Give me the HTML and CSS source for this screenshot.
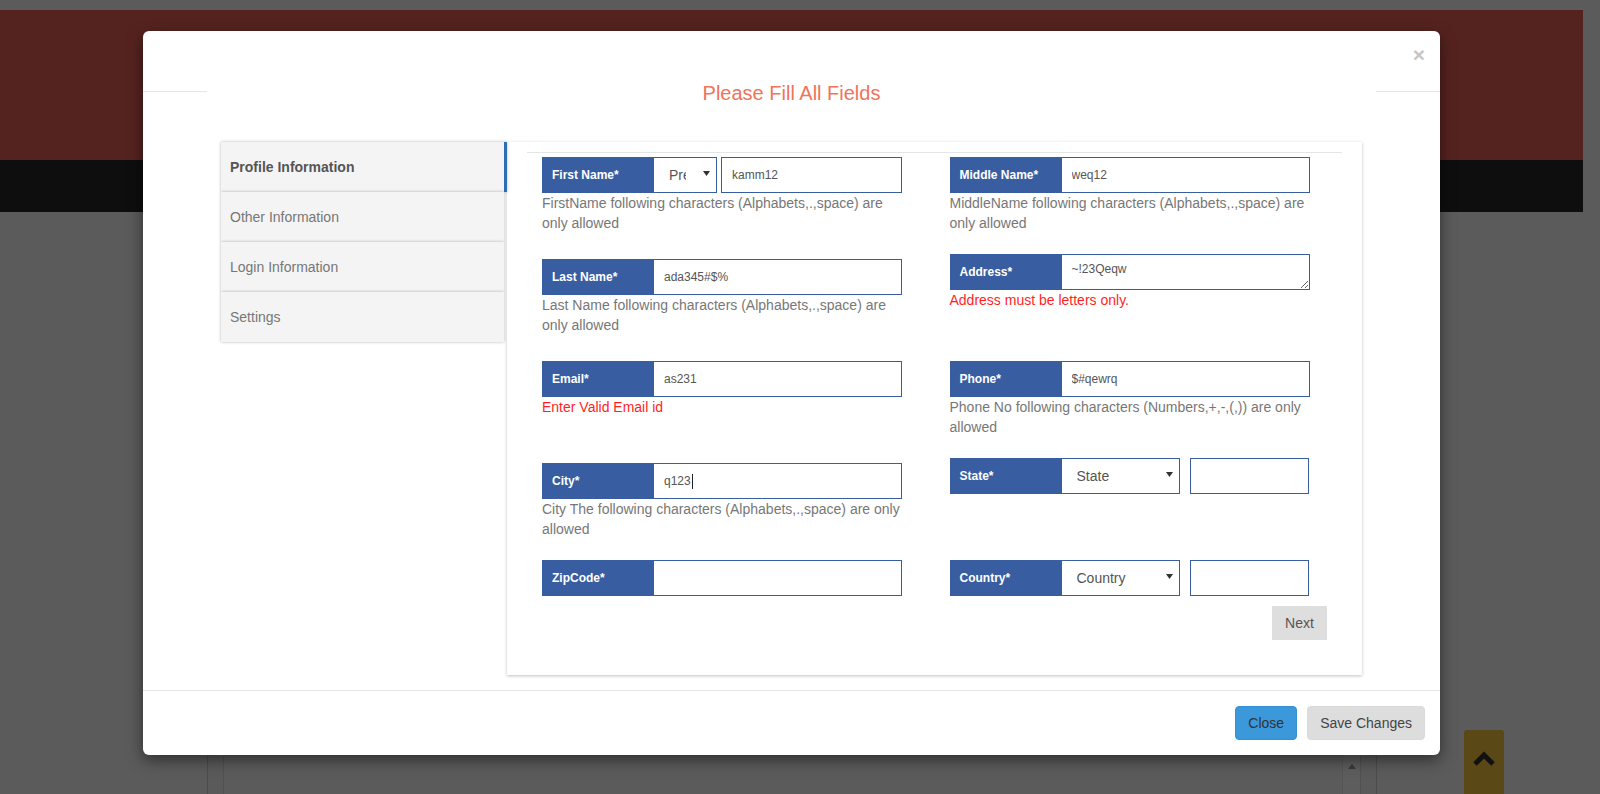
FILE: index.html
```html
<!DOCTYPE html>
<html lang="en">
<head>
<meta charset="utf-8">
<title>Profile</title>
<link rel="stylesheet" href="styles.css">
</head>
<body>
<div class="page">
  <header class="banner"></header>
  <nav class="navbar"></nav>
  <main class="content">
    <div class="content-box">
      <div class="editor">
        <div class="editor-area"></div>
        <div class="editor-scroll"><span class="scroll-up"></span></div>
      </div>
    </div>
  </main>
</div>

<a class="to-top" href="#">
  <svg width="24" height="16" viewBox="0 0 24 16"><polyline points="3,14 12,5 21,14" fill="none" stroke="#111" stroke-width="5"/></svg>
</a>

<div class="modal" role="dialog">
  <div class="modal-top"><button class="close" type="button">×</button></div>
  <div class="title-row">
    <span class="hline"></span>
    <h4 class="modal-title">Please Fill All Fields</h4>
    <span class="hline"></span>
  </div>
  <div class="modal-body">
    <ul class="tabs">
      <li class="tab active">Profile Information</li>
      <li class="tab">Other Information</li>
      <li class="tab">Login Information</li>
      <li class="tab">Settings</li>
    </ul>
    <section class="panel">
      <hr class="panel-rule">
      <form class="form">
        <div class="col">
          <div class="fg h102">
            <div class="ig">
              <label class="ig-label">First Name*</label>
              <div class="sel sel-prefix">
                <select><option>Prefix</option></select>
                <svg class="caret" width="7" height="5" viewBox="0 0 7 5"><polygon points="0,0 7,0 3.5,5" fill="#333"/></svg>
              </div>
              <input class="ig-input gap4" type="text" value="kamm12">
            </div>
            <p class="help">FirstName following characters (Alphabets,.,space) are only allowed</p>
          </div>
          <div class="fg h102">
            <div class="ig">
              <label class="ig-label">Last Name*</label>
              <input class="ig-input" type="text" value="ada345#$%">
            </div>
            <p class="help">Last Name following characters (Alphabets,.,space) are only allowed</p>
          </div>
          <div class="fg h102">
            <div class="ig">
              <label class="ig-label">Email*</label>
              <input class="ig-input" type="text" value="as231">
            </div>
            <p class="help err">Enter Valid Email id</p>
          </div>
          <div class="fg h97">
            <div class="ig">
              <label class="ig-label">City*</label>
              <div class="ig-input fake">q123<span class="cursor"></span></div>
            </div>
            <p class="help">City The following characters (Alphabets,.,space) are only allowed</p>
          </div>
          <div class="fg">
            <div class="ig">
              <label class="ig-label">ZipCode*</label>
              <input class="ig-input" type="text" value="">
            </div>
          </div>
        </div>

        <div class="col">
          <div class="fg h97">
            <div class="ig">
              <label class="ig-label">Middle Name*</label>
              <input class="ig-input" type="text" value="weq12">
            </div>
            <p class="help">MiddleName following characters (Alphabets,.,space) are only allowed</p>
          </div>
          <div class="fg h107">
            <div class="ig">
              <label class="ig-label">Address*</label>
              <textarea class="ig-input ig-textarea">~!23Qeqw</textarea>
            </div>
            <p class="help err">Address must be letters only.</p>
          </div>
          <div class="fg h97">
            <div class="ig">
              <label class="ig-label">Phone*</label>
              <input class="ig-input" type="text" value="$#qewrq">
            </div>
            <p class="help">Phone No following characters (Numbers,+,-,(,)) are only allowed</p>
          </div>
          <div class="fg h102">
            <div class="ig">
              <label class="ig-label">State*</label>
              <div class="sel sel-wide">
                <select><option>State</option></select>
                <svg class="caret" width="7" height="5" viewBox="0 0 7 5"><polygon points="0,0 7,0 3.5,5" fill="#333"/></svg>
              </div>
              <input class="ig-input gap10" type="text" value="">
            </div>
          </div>
          <div class="fg">
            <div class="ig">
              <label class="ig-label">Country*</label>
              <div class="sel sel-wide">
                <select><option>Country</option></select>
                <svg class="caret" width="7" height="5" viewBox="0 0 7 5"><polygon points="0,0 7,0 3.5,5" fill="#333"/></svg>
              </div>
              <input class="ig-input gap10" type="text" value="">
            </div>
          </div>
        </div>

        <div class="form-actions"><button class="btn-next" type="button">Next</button></div>
      </form>
    </section>
  </div>
  <div class="modal-footer">
    <button class="btn btn-close" type="button">Close</button>
    <button class="btn btn-save" type="button">Save Changes</button>
  </div>
</div>
</body>
</html>
```

FILE: styles.css
```css
html, body {
  margin: 0;
  padding: 0;
}
html {
  overflow: hidden;
}
body {
  width: 1600px;
  height: 794px;
  overflow: hidden;
  background: #5b5b5b;
  font-family: "Liberation Sans", Arial, sans-serif;
  position: relative;
}
.page {
  padding-top: 10px;
}
.banner {
  width: 1583px;
  height: 150px;
  background: #55231f;
}
.navbar {
  width: 1583px;
  height: 52px;
  background: #0e0e0e;
}
.content {
  padding: 20px 0 0 207px;
}
.content-box {
  width: 1170px;
  height: 562px;
  box-sizing: border-box;
  border-left: 1px solid #4c4c4c;
  border-right: 1px solid #4c4c4c;
  background: #5a5a5a;
  padding: 518px 15px 0 15px;
}
.editor {
  display: flex;
  height: 44px;
  border: 1px solid #515151;
  border-bottom: 0;
  background: #5b5b5b;
}
.editor-area {
  flex: 1;
}
.editor-scroll {
  width: 17px;
  border-left: 1px solid #555;
  background: #5d5d5d;
  display: flex;
  justify-content: center;
  align-items: flex-start;
  padding-top: 13px;
}
.scroll-up {
  width: 0;
  height: 0;
  border-left: 4px solid transparent;
  border-right: 4px solid transparent;
  border-bottom: 5px solid #3a3a3a;
}

.to-top {
  position: absolute;
  left: 1464px;
  top: 730px;
  width: 40px;
  height: 64px;
  box-sizing: border-box;
  padding-top: 20px;
  background: #5a4816;
  border-radius: 3px 3px 0 0;
  display: flex;
  justify-content: center;
  align-items: flex-start;
}

/* modal */
.modal {
  position: absolute;
  left: 143px;
  top: 31px;
  width: 1297px;
  background: #fff;
  border-radius: 6px;
  box-shadow: 0 5px 15px rgba(0, 0, 0, 0.5);
}
.modal-top {
  height: 51px;
  box-sizing: border-box;
  display: flex;
  justify-content: flex-end;
  align-items: flex-start;
  padding: 13px 15px 0 0;
}
.close {
  border: 0;
  background: none;
  padding: 0;
  font-family: "Liberation Sans", Arial, sans-serif;
  font-size: 21px;
  font-weight: bold;
  line-height: 21px;
  color: #c6c6c6;
}
.title-row {
  display: flex;
  align-items: flex-start;
  height: 22px;
}
.hline {
  width: 64px;
  height: 1px;
  margin-top: 9px;
  background: #e5e5e5;
  flex: none;
}
.modal-title {
  flex: 1;
  margin: 0;
  text-align: center;
  font-size: 20px;
  font-weight: normal;
  line-height: 22px;
  color: #f0735a;
}
.modal-body {
  display: flex;
  align-items: flex-start;
  padding: 38px 78px 15px;
}

.tabs {
  list-style: none;
  margin: 0;
  padding: 0;
  width: 286px;
  flex: none;
}
.tab {
  width: 283px;
  height: 50px;
  box-sizing: border-box;
  padding-left: 9px;
  display: flex;
  align-items: center;
  background: #f4f4f4;
  box-shadow: 0 0 3px rgba(0, 0, 0, 0.28);
  font-size: 14px;
  color: #777;
  position: relative;
}
.tab.active {
  width: 286px;
  border-right: 3px solid #2e6cb5;
  font-weight: bold;
  color: #555;
}

.panel {
  flex: 1;
  background: #fff;
  box-shadow: 0 1px 3px rgba(0, 0, 0, 0.25);
  padding: 10px 0 35px;
}
.panel-rule {
  margin: 0 20px;
  border: 0;
  border-top: 1px solid #e5e5e5;
  height: 0;
}
.form {
  display: grid;
  grid-template-columns: 1fr 1fr;
  column-gap: 30px;
  padding: 4px 35px 0;
  margin: 0;
}
.fg {
  box-sizing: border-box;
}
.h97 { height: 97px; }
.h102 { height: 102px; }
.h107 { height: 107px; }

.ig {
  display: flex;
  width: 360px;
  height: 36px;
}
.ig-label {
  width: 111px;
  flex: none;
  box-sizing: border-box;
  background: #385da1;
  color: #fff;
  font-size: 12px;
  font-weight: bold;
  padding: 0 0 1px 10px;
  display: flex;
  align-items: center;
}
.ig-input {
  flex: 1;
  min-width: 0;
  height: 36px;
  box-sizing: border-box;
  margin: 0;
  border: 1px solid #385da1;
  border-radius: 0;
  padding: 0 10px;
  font-family: "Liberation Sans", Arial, sans-serif;
  font-size: 12px;
  color: #555;
  background: #fff;
  outline: none;
}
.fake {
  display: flex;
  align-items: center;
}
.cursor {
  display: inline-block;
  width: 1px;
  height: 15px;
  background: #222;
  margin-left: 1px;
}
.ig-textarea {
  padding: 6px 10px;
  line-height: 16px;
  resize: vertical;
}
.gap4 { margin-left: 4px; }
.gap10 { margin-left: 10px; flex: none; width: 119px; }

.sel {
  position: relative;
  flex: none;
  height: 36px;
}
.sel select {
  appearance: none;
  -webkit-appearance: none;
  width: 100%;
  height: 36px;
  box-sizing: border-box;
  margin: 0;
  border: 1px solid #385da1;
  border-radius: 0;
  background: #fff;
  font-family: "Liberation Sans", Arial, sans-serif;
  font-size: 14px;
  color: #555;
  padding: 0 30px 0 15px;
  outline: none;
}
.sel-prefix { width: 64px; }
.sel-wide { width: 119px; }
.caret {
  position: absolute;
  right: 7px;
  top: 14px;
  pointer-events: none;
}

.help {
  width: 365px;
  margin: 0;
  font-size: 14px;
  line-height: 20px;
  color: #777;
}
.help.err {
  color: #ff1f1f;
}

.form-actions {
  grid-column: 1 / -1;
  display: flex;
  justify-content: flex-end;
  margin-top: 10px;
}
.btn-next {
  width: 55px;
  height: 34px;
  border: 0;
  border-radius: 0;
  background: #dedede;
  color: #555;
  font-family: "Liberation Sans", Arial, sans-serif;
  font-size: 14px;
  padding: 0;
}

.modal-footer {
  border-top: 1px solid #e5e5e5;
  padding: 15px;
  display: flex;
  justify-content: flex-end;
  gap: 10px;
}
.btn {
  height: 34px;
  box-sizing: border-box;
  padding: 6px 12px;
  border: 1px solid transparent;
  border-radius: 4px;
  font-family: "Liberation Sans", Arial, sans-serif;
  font-size: 14px;
  line-height: 20px;
}
.btn-close {
  background: #3a98db;
  border-color: #3590d2;
  color: #333;
}
.btn-save {
  background: #dddddd;
  border-color: #dadada;
  color: #444;
}
```
